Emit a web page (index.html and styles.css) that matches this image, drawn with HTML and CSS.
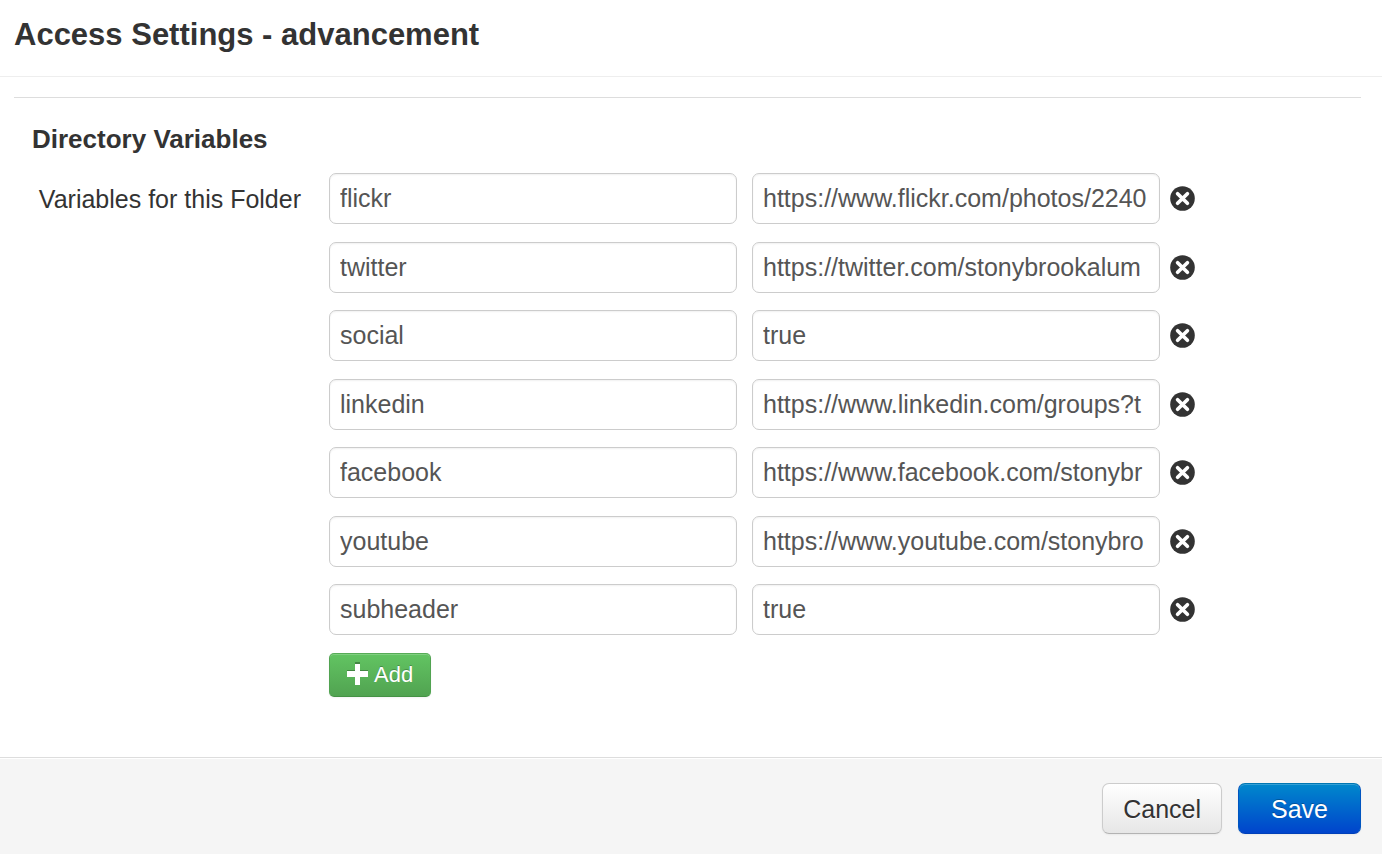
FILE: index.html
```html
<!DOCTYPE html>
<html lang="en">
<head>
  <meta charset="UTF-8" />
  <meta name="viewport" content="width=device-width, initial-scale=1.0" />
  <title>Access Settings - advancement</title>
  <link rel="stylesheet" href="styles.css">
</head>
<body>
  <svg class="sprite" aria-hidden="true">
    <symbol id="icon-remove" viewBox="0 0 25 25">
      <circle cx="12.5" cy="12.5" r="12.3" fill="#333" />
      <path d="M7.6 7.7l9.8 9.6M17.4 7.7l-9.8 9.6" stroke="#fff" stroke-width="3.7" stroke-linecap="round" />
    </symbol>
  </svg>
  <form class="modal">
    <header class="modal-header">
      <h1>Access Settings - advancement</h1>
    </header>
    <main class="modal-body">
      <h2>Directory Variables</h2>
      <div class="control-group">
        <label class="control-label" for="name1">Variables for this Folder</label>
        <div class="controls">
          <div class="variable-row">
            <input id="name1" type="text" value="flickr" />
            <input type="text" aria-label="flickr value" value="https://www.flickr.com/photos/2240" />
            <button type="button" class="remove-btn" aria-label="Remove flickr"><svg><use href="#icon-remove" /></svg></button>
          </div>
          <div class="variable-row">
            <input type="text" aria-label="Variable name" value="twitter" />
            <input type="text" aria-label="twitter value" value="https://twitter.com/stonybrookalum" />
            <button type="button" class="remove-btn" aria-label="Remove twitter"><svg><use href="#icon-remove" /></svg></button>
          </div>
          <div class="variable-row">
            <input type="text" aria-label="Variable name" value="social" />
            <input type="text" aria-label="social value" value="true" />
            <button type="button" class="remove-btn" aria-label="Remove social"><svg><use href="#icon-remove" /></svg></button>
          </div>
          <div class="variable-row">
            <input type="text" aria-label="Variable name" value="linkedin" />
            <input type="text" aria-label="linkedin value" value="https://www.linkedin.com/groups?t" />
            <button type="button" class="remove-btn" aria-label="Remove linkedin"><svg><use href="#icon-remove" /></svg></button>
          </div>
          <div class="variable-row">
            <input type="text" aria-label="Variable name" value="facebook" />
            <input type="text" aria-label="facebook value" value="https://www.facebook.com/stonybr" />
            <button type="button" class="remove-btn" aria-label="Remove facebook"><svg><use href="#icon-remove" /></svg></button>
          </div>
          <div class="variable-row">
            <input type="text" aria-label="Variable name" value="youtube" />
            <input type="text" aria-label="youtube value" value="https://www.youtube.com/stonybro" />
            <button type="button" class="remove-btn" aria-label="Remove youtube"><svg><use href="#icon-remove" /></svg></button>
          </div>
          <div class="variable-row">
            <input type="text" aria-label="Variable name" value="subheader" />
            <input type="text" aria-label="subheader value" value="true" />
            <button type="button" class="remove-btn" aria-label="Remove subheader"><svg><use href="#icon-remove" /></svg></button>
          </div>
          <button type="button" class="btn add-btn">
            <svg viewBox="0 0 21 23" aria-hidden="true">
              <path d="M8 0h5v8h8v5h-8v8H8v-8H0V8h8z" fill="#387038" opacity=".7" />
              <path d="M8 2h5v7h8v6h-8v8H8v-8H0V9h8z" fill="#fff" />
            </svg>
            Add
          </button>
        </div>
      </div>
    </main>
    <footer class="modal-footer">
      <button type="button" class="btn cancel-btn">Cancel</button>
      <button type="submit" class="btn save-btn">Save</button>
    </footer>
  </form>
</body>
</html>
```
FILE: styles.css
```css
* {
  box-sizing: border-box;
}
body {
  margin: 0;
  font-family: "Helvetica Neue", "Liberation Sans", Arial, sans-serif;
  font-size: 25px;
  line-height: 34px;
  color: #333;
  background: #fff;
}
.sprite {
  position: absolute;
  width: 0;
  height: 0;
}
.modal {
  display: flex;
  flex-direction: column;
  min-height: 100vh;
}
.modal-header {
  padding: 18px 14px 24px;
  border-bottom: 1px solid #eee;
}
h1, h2 {
  margin: 0;
  line-height: 34px;
}
h1 {
  font-size: 31px;
}
h2 {
  font-size: 26px;
  padding: 24px 18px 17px;
}
.modal-body {
  flex: 1;
  margin: 20px 21px 0 14px;
  padding-bottom: 60px;
  border-top: 1px solid #ddd;
}
.control-group {
  display: flex;
  gap: 28px;
}
.control-label {
  width: 287px;
  flex-shrink: 0;
  padding-top: 9px;
  text-align: right;
}
.controls {
  flex: 1;
  min-width: 0;
}
.variable-row {
  display: flex;
  align-items: center;
  margin-bottom: 18px;
}
.variable-row:nth-child(even) {
  margin-bottom: 17px;
}
.variable-row input {
  flex: 0 1 408px;
  min-width: 0;
  height: 51px;
  margin-right: 15px;
  padding: 0 10px;
  font: inherit;
  color: #555;
  background: #fff;
  border: 1px solid #ccc;
  border-radius: 7px;
  box-shadow: inset 0 1px 2px rgba(0, 0, 0, 0.06);
}
.variable-row input + input {
  margin-right: 10px;
}
.remove-btn {
  flex-shrink: 0;
  padding: 0;
  border: none;
  background: none;
  cursor: pointer;
}
.remove-btn svg {
  display: block;
  width: 25px;
  height: 25px;
}
.btn {
  height: 51px;
  padding: 0 20px;
  font: inherit;
  border: 1px solid;
  border-radius: 7px;
  box-shadow: inset 0 1px 0 rgba(255, 255, 255, 0.2), 0 1px 2px rgba(0, 0, 0, 0.05);
  cursor: pointer;
}
.add-btn {
  display: flex;
  align-items: center;
  gap: 6px;
  height: 44px;
  padding: 0 17px;
  font-size: 22px;
  color: #fff;
  text-shadow: 0 -1px 0 rgba(0, 0, 0, 0.25);
  background: linear-gradient(#62c462, #51a351);
  border-color: #57ac57 #51a351 #459245;
  border-radius: 5px;
}
.add-btn svg {
  width: 21px;
  height: 23px;
  margin-bottom: 4px;
}
.modal-footer {
  display: flex;
  justify-content: flex-end;
  gap: 16px;
  padding: 25px 21px 20px;
  background: #f5f5f5;
  border-top: 1px solid #ddd;
  box-shadow: inset 0 1px 0 #fff;
}
.cancel-btn {
  color: #333;
  text-shadow: 0 1px 1px rgba(255, 255, 255, 0.75);
  background: linear-gradient(#fff, #e6e6e6);
  border-color: #ccc #ccc #b3b3b3;
}
.save-btn {
  padding: 0 32px;
  color: #fff;
  text-shadow: 0 -1px 0 rgba(0, 0, 0, 0.25);
  background: linear-gradient(#08c, #04c);
  border-color: #0077b3 #0055c0 #0040b8;
}
```
